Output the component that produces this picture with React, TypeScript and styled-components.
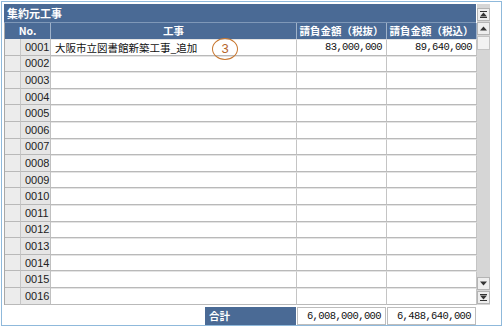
import React from "react";
import styled, { createGlobalStyle } from "styled-components";

const GlobalStyle = createGlobalStyle`
  html, body { margin: 0; padding: 0; background: #ffffff; }
  body { font-family: "Liberation Sans", "Noto Sans CJK JP", sans-serif; }
`;

const Frame = styled.div`
  box-sizing: border-box;
  margin: 1px 0 0 1px;
  width: 501px;
  height: 325px;
  border: 1px solid #8fb9db;
  padding: 2px 0 0 2px;
  position: relative;
`;

const Body = styled.div`
  display: flex;
  align-items: stretch;
`;

const Main = styled.div`
  width: 472px;
  display: flex;
  flex-direction: column;
`;

const TitleBar = styled.div`
  height: 18px;
  background: #4a6a95;
  color: #ffffff;
  font-family: "Noto Sans CJK JP", sans-serif;
  font-weight: 700;
  font-size: 11px;
  line-height: 18px;
  padding-left: 3px;
  border-bottom: 1px solid #7f98b8;
`;

const Grid = styled.div`
  display: grid;
  grid-template-columns: 16px 30px 246px 90px 90px;
  grid-template-rows: 16px;
  grid-auto-rows: 16.6px;
  border-left: 1px solid #a8a8a8;
  box-sizing: border-box;
`;

const HeadCell = styled.div<{ $span?: number }>`
  grid-column: span ${(p) => p.$span ?? 1};
  background: #4b6b96;
  color: #ffffff;
  font-family: "Noto Sans CJK JP", sans-serif;
  font-weight: 700;
  font-size: 10.5px;
  line-height: 16px;
  text-align: center;
  border-right: 1px solid #9fb2ca;
  white-space: nowrap;
  overflow: hidden;
`;

const Gutter = styled.div`
  background: #ececec;
  border-right: 1px solid #c6c6c6;
  border-bottom: 1px solid #b9b9b9;
  box-sizing: border-box;
`;

const NoCell = styled.div`
  background: #e6e6e6;
  border-right: 1px solid #c0c0c0;
  border-bottom: 1px solid #b9b9b9;
  box-sizing: border-box;
  font-family: "Liberation Sans", sans-serif;
  font-size: 11px;
  color: #222;
  padding-left: 4px;
  display: flex;
  align-items: center;
`;

const DataCell = styled.div<{ $right?: boolean }>`
  background: #ffffff;
  border-right: 1px solid #c4c4c4;
  border-bottom: 1px solid #b9b9b9;
  border-top: 1px solid #e4e4e4;
  box-sizing: border-box;
  font-family: ${(p) =>
    p.$right ? `"Liberation Mono", monospace` : `"Noto Sans CJK JP", sans-serif`};
  font-size: 10.5px;
  letter-spacing: ${(p) => (p.$right ? "-0.6px" : "0")};
  color: #111;
  display: flex;
  align-items: center;
  justify-content: ${(p) => (p.$right ? "flex-end" : "flex-start")};
  padding: 0 4px;
  white-space: nowrap;
  overflow: hidden;
`;

const ScrollBar = styled.div`
  width: 13px;
  margin-left: 1px;
  background: #d6d6d6;
  display: flex;
  flex-direction: column;
  padding-top: 4px;
  box-sizing: border-box;
`;

const SBtn = styled.div`
  height: 13px;
  background: #eeeeee;
  border: 1px solid #b4b4b4;
  box-sizing: border-box;
  display: flex;
  align-items: center;
  justify-content: center;
  margin-bottom: 1px;
`;

const Thumb = styled.div`
  height: 14px;
  background: #f2f2f2;
  border: 1px solid #c4c4c4;
  box-sizing: border-box;
`;

const Track = styled.div`
  flex: 1;
`;

const TotalRow = styled.div`
  display: grid;
  grid-template-columns: 201px 91px 90px 90px;
  height: 18px;
  margin-top: 2px;
`;

const Spacer = styled.div``;

const TotalLabel = styled.div`
  background: #4a6a95;
  color: #ffffff;
  font-family: "Noto Sans CJK JP", sans-serif;
  font-weight: 700;
  font-size: 10.5px;
  line-height: 18px;
  padding-left: 4px;
`;

const TotalValue = styled.div`
  background: #ffffff;
  border: 1px solid #bdbdbd;
  box-sizing: border-box;
  font-family: "Liberation Mono", monospace;
  font-size: 10.5px;
  letter-spacing: -0.6px;
  color: #111;
  display: flex;
  align-items: center;
  justify-content: flex-end;
  padding-right: 4px;
  margin-left: 1px;
`;

const Marker = styled.div`
  position: absolute;
  left: 210px;
  top: 36px;
  width: 26px;
  height: 22px;
  border: 1.6px solid #c8772f;
  border-radius: 50%;
  box-sizing: border-box;
  color: #b5652a;
  font-family: "Liberation Sans", sans-serif;
  font-size: 13px;
  line-height: 19px;
  text-align: center;
`;

const Icon = ({ kind }: { kind: "first" | "up" | "down" | "last" }) => {
  const c = "#333";
  if (kind === "up")
    return (
      <svg width="7" height="5" viewBox="0 0 7 5">
        <polygon points="3.5,0.5 7,4.5 0,4.5" fill={c} />
      </svg>
    );
  if (kind === "down")
    return (
      <svg width="7" height="5" viewBox="0 0 7 5">
        <polygon points="0,0.5 7,0.5 3.5,4.5" fill={c} />
      </svg>
    );
  if (kind === "first")
    return (
      <svg width="7" height="7" viewBox="0 0 7 7">
        <rect x="0" y="0" width="7" height="1" fill={c} />
        <polygon points="3.5,1.5 7,5.5 0,5.5" fill={c} />
        <rect x="0" y="6" width="7" height="1" fill={c} />
      </svg>
    );
  return (
    <svg width="7" height="7" viewBox="0 0 7 7">
      <rect x="0" y="0" width="7" height="1" fill={c} />
      <polygon points="0,1.5 7,1.5 3.5,5.5" fill={c} />
      <rect x="0" y="6" width="7" height="1" fill={c} />
    </svg>
  );
};

type Row = { no: string; name: string; ex: string; inc: string };

const rows: Row[] = Array.from({ length: 16 }, (_, i) => ({
  no: String(i + 1).padStart(4, "0"),
  name: i === 0 ? "大阪市立図書館新築工事_追加" : "",
  ex: i === 0 ? "83,000,000" : "",
  inc: i === 0 ? "89,640,000" : "",
}));

export default function App() {
  return (
    <>
      <GlobalStyle />
      <Frame>
        <Body>
          <Main>
            <TitleBar>集約元工事</TitleBar>
            <Grid>
              <HeadCell $span={2}>No.</HeadCell>
              <HeadCell>工事</HeadCell>
              <HeadCell>請負金額（税抜）</HeadCell>
              <HeadCell>請負金額（税込）</HeadCell>
              {rows.map((r) => (
                <React.Fragment key={r.no}>
                  <Gutter />
                  <NoCell>{r.no}</NoCell>
                  <DataCell>{r.name}</DataCell>
                  <DataCell $right>{r.ex}</DataCell>
                  <DataCell $right>{r.inc}</DataCell>
                </React.Fragment>
              ))}
            </Grid>
          </Main>
          <ScrollBar>
            <SBtn>
              <Icon kind="first" />
            </SBtn>
            <SBtn>
              <Icon kind="up" />
            </SBtn>
            <Thumb />
            <Track />
            <SBtn>
              <Icon kind="down" />
            </SBtn>
            <SBtn>
              <Icon kind="last" />
            </SBtn>
          </ScrollBar>
        </Body>
        <TotalRow>
          <Spacer />
          <TotalLabel>合計</TotalLabel>
          <TotalValue>6,008,000,000</TotalValue>
          <TotalValue>6,488,640,000</TotalValue>
        </TotalRow>
        <Marker>3</Marker>
      </Frame>
    </>
  );
}
